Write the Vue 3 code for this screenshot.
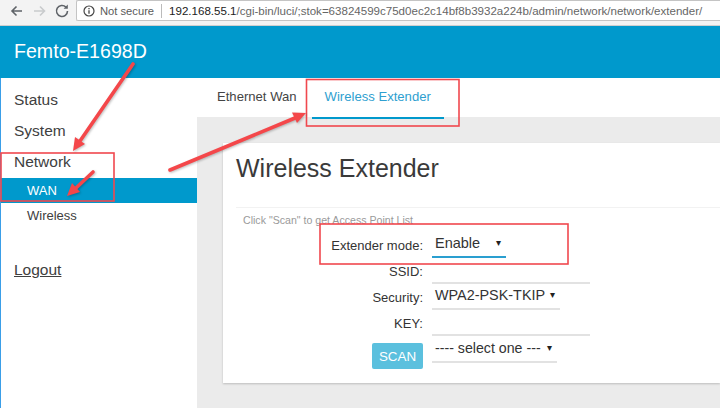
<template>
  <div class="page">
    <!-- browser toolbar -->
    <div class="toolbar">
      <svg class="nav-icons" width="70" height="24" viewBox="0 0 70 24">
        <path d="M21 11H11.5M15.5 6.5L11 11l4.5 4.5" fill="none" stroke="#5f6368" stroke-width="1.6" />
        <path d="M33 11h10M39 6.5l4.5 4.5-4.5 4.5" fill="none" stroke="#c9cbcd" stroke-width="1.6" />
        <path d="M66.5 11a5.5 5.5 0 1 1-1.6-3.9" fill="none" stroke="#5f6368" stroke-width="1.6" />
        <path d="M66.8 4.5v4.2h-4.2z" fill="#5f6368" />
      </svg>
      <div class="omnibox">
        <svg class="info" width="12" height="12" viewBox="0 0 12 12">
          <circle cx="6" cy="6" r="5" fill="none" stroke="#444" stroke-width="1.2" />
          <path d="M6 5.2v3.6M6 3v1.2" stroke="#444" stroke-width="1.3" />
        </svg>
        <span class="secure">Not secure</span>
        <span class="url"><b>192.168.55.1</b>/cgi-bin/luci/;stok=63824599c75d0ec2c14bf8b3932a224b/admin/network/network/extender/</span>
      </div>
    </div>

    <header class="brand-bar">Femto-E1698D</header>

    <div class="body">
      <aside class="sidebar">
        <a class="menu first">Status</a>
        <a class="menu">System</a>
        <a class="menu">Network</a>
        <a class="sub active">WAN</a>
        <a class="sub">Wireless</a>
        <a class="logout">Logout</a>
      </aside>

      <main class="main">
        <nav class="tabs">
          <span class="tab">Ethernet Wan</span>
          <span class="tab selected">Wireless Extender</span>
        </nav>
        <div class="content">
          <section class="card">
            <h1>Wireless Extender</h1>
            <p class="hint">Click "Scan" to get Access Point List</p>
            <div class="form">
              <div class="row">
                <label>Extender mode:</label>
                <div class="field mode"><span>Enable</span><i>▾</i></div>
              </div>
              <div class="row">
                <label>SSID:</label>
                <div class="field wide"></div>
              </div>
              <div class="row">
                <label>Security:</label>
                <div class="field sec"><span>WPA2-PSK-TKIP</span><i>▾</i></div>
              </div>
              <div class="row">
                <label>KEY:</label>
                <div class="field wide"></div>
              </div>
              <div class="row last">
                <div class="label-slot"><button>SCAN</button></div>
                <div class="field pick"><span>---- select one ---</span><i>▾</i></div>
              </div>
            </div>
          </section>
        </div>
      </main>
    </div>

    <!-- hand drawn annotations on top of the screenshot -->
    <svg class="notes" width="720" height="408" viewBox="0 0 720 408">
      <g fill="none" stroke="#f0484e" stroke-width="1.6">
        <rect x="1" y="153" width="113" height="48" />
        <rect x="306.5" y="79.5" width="152.5" height="46.5" />
        <rect x="320" y="224" width="248" height="40" />
      </g>
      <g class="arrows">
        <g stroke="#f4474a" stroke-width="3.6" stroke-linecap="round">
          <path d="M133 64L80 141" />
          <path d="M170 170L295 118" />
          <path d="M93 172L76 188" />
        </g>
        <g fill="#f4474a">
          <path d="M73 151L75 137L85 144z" />
          <path d="M306 113L292 112.5L297 123z" />
          <path d="M67 196L72 183L80 192z" />
        </g>
      </g>
    </svg>
  </div>
</template>

<script setup>
</script>

<style>
html, body { margin: 0; background: #fff; }
</style>

<style scoped>
.page {
  position: relative;
  width: 720px;
  height: 408px;
  overflow: hidden;
  font-family: "Liberation Sans", Arial, sans-serif;
  color: #333;
}

.toolbar {
  height: 26px;
  display: flex;
  box-sizing: border-box;
  padding: 0 0 0 1px;
  background: #f3f3f3;
  border-bottom: 1px solid #cfcfcf;
}

.nav-icons { flex: none; margin: 0 5px 0 0; }

.omnibox {
  flex: 1;
  height: 21px;
  display: flex;
  align-items: center;
  box-sizing: border-box;
  background: #fff;
  border: 1px solid #c4c4c4;
  border-right: 0;
  border-radius: 2px 0 0 2px;
  white-space: nowrap;
  overflow: hidden;
  font-size: 11.2px;
  color: #666;
}

.info { margin-left: 6px; flex: none; }

.secure {
  margin-left: 5px;
  padding-right: 7px;
  margin-right: 7px;
  border-right: 1px solid #bbb;
  color: #5a5a5a;
  line-height: 14px;
}

.url { font-size: 11.55px; }
.url b { font-weight: 400; color: #222; }

.brand-bar {
  height: 52px;
  line-height: 50px;
  box-sizing: border-box;
  padding-left: 14px;
  background: #0099cc;
  color: #fff;
  font-size: 19.6px;
}

.body {
  display: flex;
  height: 330px;
}

.sidebar {
  flex: none;
  width: 197px;
  box-sizing: border-box;
  border-left: 1px solid #3a9ee8;
  display: flex;
  flex-direction: column;
}

.menu {
  height: 31px;
  line-height: 31px;
  padding-left: 13px;
  font-size: 15.5px;
  color: #404040;
}

.menu.first { margin-top: 6px; }

.sub {
  height: 25px;
  line-height: 25px;
  padding-left: 26px;
  font-size: 13px;
  color: #404040;
}

.sub.active { margin-top: 1px; background: #0099cc; color: #fff; }

.logout {
  margin-top: 32px;
  padding-left: 13px;
  font-size: 15.5px;
  line-height: 20px;
  color: #404040;
  text-decoration: underline;
}

.main {
  flex: 1;
  display: flex;
  flex-direction: column;
}

.tabs {
  height: 39px;
  display: flex;
  padding-left: 6px;
  font-size: 13.1px;
}

.tab {
  box-sizing: border-box;
  height: 39px;
  line-height: 37px;
  padding: 0 14px;
  color: #444;
}

.tab.selected {
  margin-left: 1px;
  padding: 0 13px;
  color: #2f9fd0;
  position: relative;
}

.tab.selected::after {
  content: "";
  position: absolute;
  left: 0;
  right: 0;
  bottom: -2px;
  height: 2px;
  background: #0099cc;
}

.content {
  flex: 1;
  background: #ebebeb;
  padding: 26px 0 0 26px;
}

.card {
  height: 240px;
  box-sizing: border-box;
  background: #fff;
  box-shadow: 0 1px 2px rgba(0, 0, 0, .2);
  padding: 0 0 0 13px;
}

h1 {
  margin: 0;
  height: 64px;
  line-height: 50px;
  font-size: 25px;
  font-weight: 400;
  color: #3a3a3a;
  border-bottom: 1px solid #f2f2f2;
}

.hint {
  margin: 5px 0 0 7px;
  font-size: 10.6px;
  line-height: 14px;
  color: #9a9a9a;
}

.form {
  margin: 5px 0 0 7px;
  display: flex;
  flex-direction: column;
}

.row {
  display: flex;
  height: 26px;
}

.row.last { margin-top: 1px; }

.row label,
.label-slot {
  width: 180px;
  flex: none;
  text-align: right;
  font-size: 13px;
  line-height: 28px;
  color: #333;
}

.label-slot { line-height: normal; }

button {
  display: block;
  margin: 6px 0 0 auto;
  width: 51px;
  height: 26px;
  border: 0;
  border-radius: 2px;
  padding: 0;
  background: #5bc0de;
  color: #fff;
  font: 13.4px "Liberation Sans", Arial, sans-serif;
}

.field {
  margin-left: 9px;
  height: 26px;
  box-sizing: border-box;
  padding-left: 3px;
  display: flex;
  justify-content: space-between;
  font-size: 14.4px;
  line-height: 22px;
  color: #333;
  border-bottom: 2px solid #e2e2e2;
}

.field i {
  font-style: normal;
  font-size: 10px;
  padding-right: 5px;
  color: #222;
}

.field.mode { width: 74px; font-size: 14.5px; border-bottom-color: #2a9fd0; }
.field.wide { width: 158px; }
.field.sec { width: 128px; }
.field.pick { width: 125px; font-size: 14.2px; }

.notes {
  position: absolute;
  left: 0;
  top: 0;
  pointer-events: none;
}

.arrows {
  filter: drop-shadow(1px 1px 1px rgba(0, 0, 0, .25));
}
</style>
